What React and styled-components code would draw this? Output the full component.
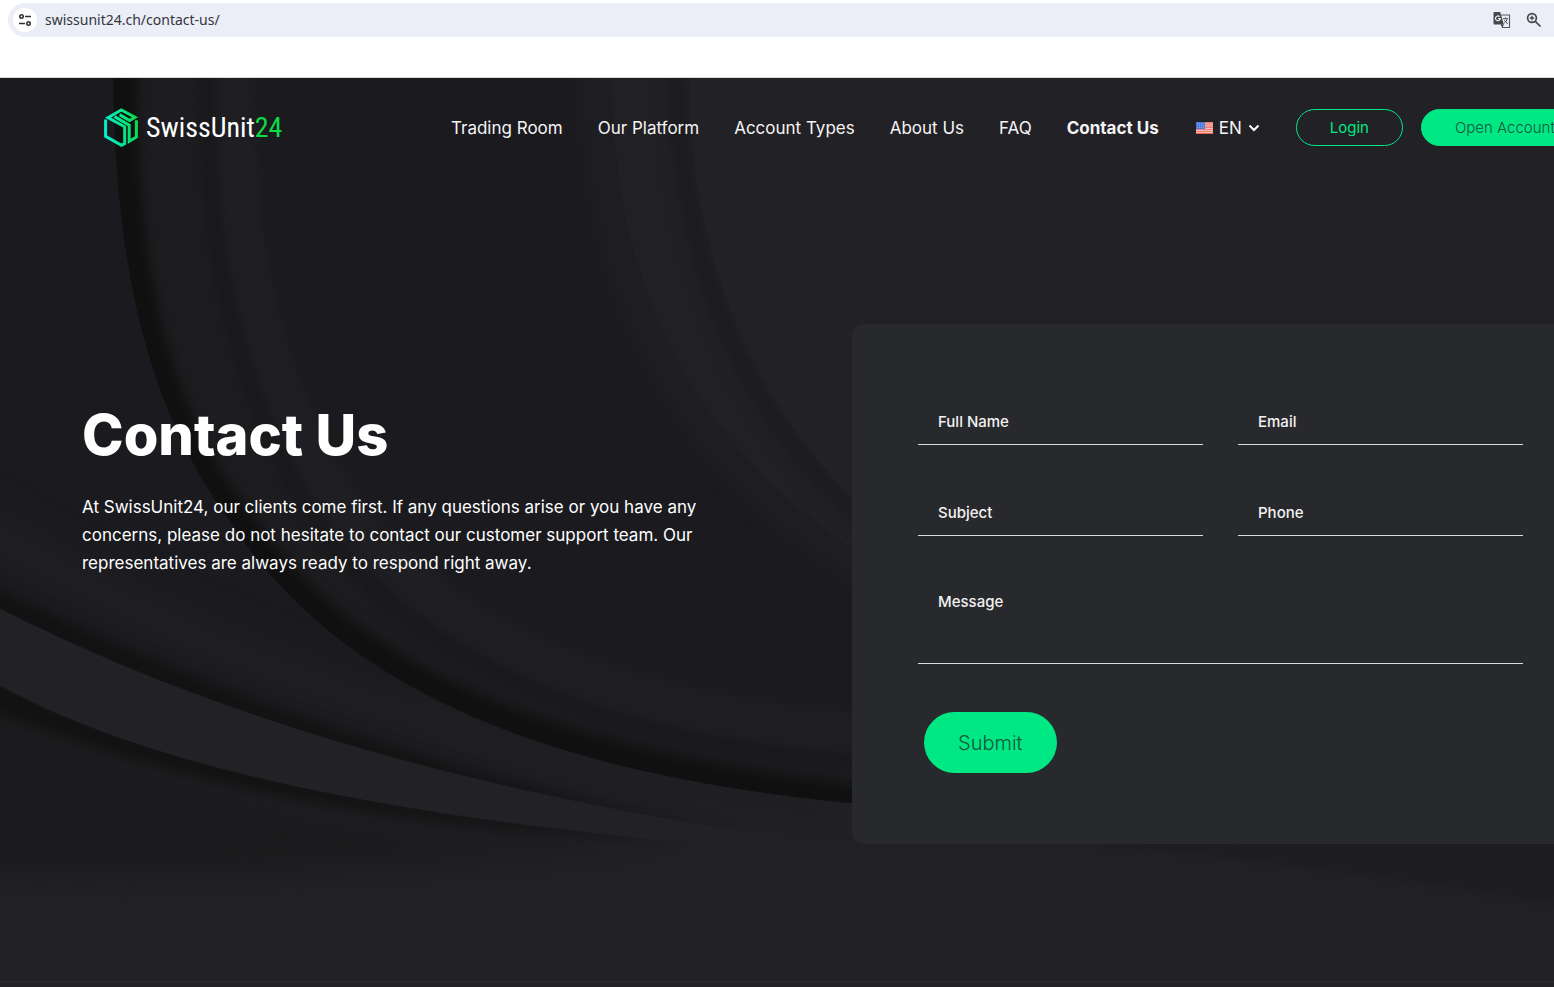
import React from 'react';
import styled, { createGlobalStyle, css } from 'styled-components';

const GlobalStyle = createGlobalStyle`
  *, *::before, *::after { box-sizing: border-box; }
  html, body, #root { min-height: 100vh; }
  body { margin: 0; background: #222126; overflow-x: hidden; font-family: Inter, "Liberation Sans", sans-serif; }
  #root { display: flex; }
  input, textarea, button { font-family: inherit; }
`;

const Page = styled.div`
  flex: 1;
  min-width: 0;
  display: flex;
  flex-direction: column;
`;

const BrowserBar = styled.div`
  height: 78px;
  padding: 3px 0 0 8px;
  background: #fff;
  border-bottom: 1px solid #dcdcdf;
`;

const AddressBar = styled.div`
  height: 34px;
  display: flex;
  align-items: center;
  gap: 8px;
  padding: 0 12px 0 5px;
  background: #ebeef7;
  border-radius: 17px 0 0 17px;
`;

const SiteInfo = styled.button`
  width: 24px;
  height: 24px;
  display: grid;
  place-items: center;
  padding: 0;
  border: 0;
  border-radius: 50%;
  background: #fff;
`;

const Address = styled.input`
  flex: 1;
  min-width: 0;
  padding: 0;
  border: 0;
  outline: 0;
  background: transparent;
  color: #33353a;
  font: 14px/20px "Noto Sans", sans-serif;
`;

const BarIcons = styled.div`
  display: flex;
  align-items: center;
  gap: 15px;
`;

const Site = styled.div`
  position: relative;
  flex: 1;
  display: flex;
  flex-direction: column;
  overflow: hidden;
  background: #222126;
`;

const Waves = styled.svg`
  position: absolute;
  inset: 0;
  width: 100%;
  height: 100%;
`;

const Header = styled.header`
  position: relative;
  display: flex;
  align-items: center;
  height: 99px;
  padding-left: 104px;
`;

const Logo = styled.a`
  display: flex;
  align-items: center;
  gap: 8px;
  width: 347px;
  flex: none;
  color: #fff;
  text-decoration: none;
  font: 28px/38px "Roboto Condensed", Roboto, sans-serif;
`;

const LogoNumber = styled.span`
  color: #0bdc46;
`;

const Nav = styled.nav`
  flex: none;
  display: flex;
  align-items: center;
  gap: 35px;
`;

const NavLink = styled.a`
  color: #f4f4f4;
  font-size: 17px;
  line-height: 24px;
  font-weight: ${(p) => (p.$active ? 700 : 400)};
  text-decoration: none;
  white-space: nowrap;
`;

const Language = styled.button`
  display: flex;
  align-items: center;
  gap: 6px;
  padding: 0 0 0 2px;
  border: 0;
  background: none;
  color: #f4f4f4;
  font-size: 17px;
  line-height: 24px;
`;

const Actions = styled.div`
  flex: none;
  display: flex;
  gap: 18px;
  margin-left: 36px;
`;

const PillLink = styled.a`
  height: 37px;
  padding: 0 33px;
  border: 1px solid #00e884;
  border-radius: 19px;
  font-size: 15px;
  line-height: 35px;
  text-decoration: none;
  white-space: nowrap;
  ${(p) =>
    p.$filled
      ? css`background: #00e884; color: #17553d; font-weight: 300;`
      : css`color: #00e884;`}
`;

const Main = styled.main`
  position: relative;
  flex: 1;
  display: grid;
  grid-template-columns: minmax(0, 770px) minmax(702px, 1fr);
  align-items: start;
  padding: 147px 0 0 82px;
`;

const Intro = styled.section`
  padding: 76px 120px 0 0;
  color: #fff;
`;

const Title = styled.h1`
  margin: 0 0 23px;
  font-size: 56px;
  line-height: 70px;
  font-weight: 800;
`;

const Lead = styled.p`
  margin: 0;
  font-size: 17px;
  line-height: 28px;
`;

const Card = styled.form`
  height: 520px;
  padding: 74px 31px 0 66px;
  display: grid;
  grid-template-columns: 1fr 1fr;
  grid-auto-rows: max-content;
  column-gap: 35px;
  row-gap: 44px;
  border-radius: 12px 0 0 12px;
  background: #28292d;
`;

const fieldStyle = css`
  display: block;
  width: 100%;
  border: 0;
  border-bottom: 1px solid #dedede;
  border-radius: 0;
  outline: 0;
  background: transparent;
  color: #f2f2f2;
  font-size: 15px;
  font-weight: 500;
  line-height: 20px;
  &::placeholder { color: #f2f2f2; opacity: 1; }
`;

const Input = styled.input`
  ${fieldStyle}
  height: 47px;
  padding: 0 20px;
`;

const Message = styled.textarea`
  ${fieldStyle}
  grid-column: 1 / -1;
  height: 84px;
  padding: 12px 20px;
  resize: none;
`;

const Submit = styled.button`
  justify-self: start;
  height: 61px;
  margin: 4px 6px 0;
  padding: 0 34px;
  border: 0;
  border-radius: 31px;
  background: #00e884;
  color: #17553d;
  font-size: 20px;
  font-weight: 300;
  line-height: 24px;
`;

const Footer = styled.footer`
  position: relative;
  height: 6px;
  border-top: 1px solid #2a2a2e;
`;

function TuneIcon() {
  return (
    <svg width="14" height="14" viewBox="0 0 14 14" fill="none" stroke="#303236" strokeWidth="1.6">
      <circle cx="3.5" cy="3.5" r="1.7" />
      <path d="M7 3.5h6M1 10.5h6" />
      <circle cx="10.5" cy="10.5" r="1.7" />
    </svg>
  );
}

function TranslateIcon() {
  return (
    <svg width="18" height="18" viewBox="0 0 18 18">
      <path d="M8 4h8.5v12.5H9.5L8 12" fill="none" stroke="#55575b" strokeWidth="1.1" />
      <path d="M1.5 1h5.6l3.8 12.5H1.5a1 1 0 0 1-1-1V2a1 1 0 0 1 1-1z" fill="#46484c" />
      <path d="M6.6 5.6a2.4 2.4 0 1 0 .7 2H5.2" fill="none" stroke="#fff" strokeWidth="1.1" />
      <path d="M10 7.6h5M12.4 6.4v1.2M14.2 7.6c-.4 2-1.8 3.6-3 4.5M11.3 9l3.4 4" fill="none" stroke="#55575b" />
      <path d="M8 13.5h3l-1.6 3z" fill="#46484c" />
    </svg>
  );
}

function ZoomIcon() {
  return (
    <svg width="16" height="16" viewBox="0 0 16 16" fill="none" stroke="#46484c" strokeWidth="1.7">
      <circle cx="6" cy="6" r="4.4" />
      <path d="M9.3 9.3 14.5 14.5" />
      <path d="M6 3.8v4.4M3.8 6h4.4" strokeWidth="1.3" />
    </svg>
  );
}

function CubeLogo() {
  return (
    <svg width="34" height="39" viewBox="0 0 34 39" fill="none" stroke="url(#cube)" strokeWidth="3">
      <defs>
        <linearGradient id="cube" gradientUnits="userSpaceOnUse" x1="0" y1="20" x2="34" y2="16">
          <stop offset="0" stopColor="#06efd0" />
          <stop offset=".5" stopColor="#06e694" />
          <stop offset="1" stopColor="#0bdc46" />
        </linearGradient>
      </defs>
      <path d="M1.6 11.4V28.4L17.5 37.2L20.7 35.6V18.8L4 9.6L17.3 1.9L31 9.3L25.6 12.6L15.6 6.6" />
      <path d="M10.6 8.6L25.2 17.2V33.4L32.4 29V12.2" />
    </svg>
  );
}

function Flag() {
  return (
    <svg width="17" height="12" viewBox="0 0 17 12">
      <rect width="17" height="12" fill="#f7dcd8" />
      <path d="M0 .9h17M0 3h17M0 5.1h17M0 7.2h17M0 9.3h17M0 11.4h17" stroke="#ec5f50" strokeWidth="1.1" />
      <rect width="9" height="7" fill="#4a78dc" />
      <path d="M1 1.5h7M1 3.5h7M1 5.5h7" stroke="#a9c2f5" strokeWidth=".7" strokeDasharray="1 1" />
    </svg>
  );
}

function Chevron() {
  return (
    <svg width="12" height="8" viewBox="0 0 12 8" fill="none" stroke="#fff" strokeWidth="2">
      <path d="M1.5 1.5 6 6l4.5-4.5" />
    </svg>
  );
}

function Background() {
  return (
    <Waves viewBox="0 0 1554 850" preserveAspectRatio="none" aria-hidden="true">
      <defs>
        <filter id="soft" filterUnits="userSpaceOnUse" x="-100" y="-100" width="1754" height="1050" colorInterpolationFilters="sRGB">
          <feGaussianBlur stdDeviation="6" />
        </filter>
        <filter id="softer" filterUnits="userSpaceOnUse" x="-100" y="-100" width="1754" height="1050" colorInterpolationFilters="sRGB">
          <feGaussianBlur stdDeviation="15" />
        </filter>
        <linearGradient id="lower" gradientUnits="userSpaceOnUse" x1="400" y1="0" x2="760" y2="0">
          <stop offset="0" stopColor="#1b1b1f" />
          <stop offset="1" stopColor="#222126" />
        </linearGradient>
        <clipPath id="mainSheet">
          <path d="M113 0C115 170 145 305 228 412C330 560 520 648 850 678L1554 700V0Z" />
        </clipPath>
        <clipPath id="innerSheet">
          <path d="M216 0C216 150 232 250 304 380C390 520 560 610 850 632L1554 640V0Z" />
        </clipPath>
        <clipPath id="aboveA"><path d="M0 0H1554V720H850C540 680 250 615 0 496Z" /></clipPath>
        <clipPath id="belowB"><path d="M0 568C150 645 390 690 700 716L1554 760V850H0Z" /></clipPath>
      </defs>
      <rect width="1554" height="850" fill="#222126" />
      <path d="M0 0H1554V720H850C540 680 250 615 0 496Z" fill="url(#lower)" />
      <g clipPath="url(#aboveA)">
        <path d="M-60 395C180 540 460 630 850 690" fill="none" stroke="#1f1f23" strokeWidth="40" filter="url(#softer)" />
        <path d="M-40 484C250 622 500 676 740 704C500 666 250 598 -40 460Z" fill="#111211" filter="url(#soft)" />
      </g>
      <g clipPath="url(#belowB)">
        <path d="M-60 560C200 690 450 716 720 716C450 735 200 752 -60 745Z" fill="#1b1b1d" filter="url(#softer)" />
        <path d="M-40 545C150 640 390 684 680 712C430 706 180 668 -40 580Z" fill="#111211" filter="url(#soft)" />
      </g>
      <g clipPath="url(#mainSheet)">
        <rect width="1554" height="760" fill="#1d1d20" />
        <path d="M122 -20C120 170 150 305 233 408C335 554 525 645 900 680" fill="none" stroke="#0f100f" strokeWidth="30" filter="url(#soft)" />
        <path d="M206 -20C206 150 224 255 294 384C380 528 560 618 900 642" fill="none" stroke="#18181a" strokeWidth="12" filter="url(#soft)" />
      </g>
      <g clipPath="url(#innerSheet)">
        <rect width="1554" height="760" fill="#1b1b1f" />
        <path d="M236 -20C236 150 252 245 320 368C406 504 576 594 900 616" fill="none" stroke="#1f1f23" strokeWidth="38" filter="url(#soft)" />
        <path d="M575 -40C575 180 640 370 900 500V-40Z" fill="#1e1e22" filter="url(#soft)" />
        <path d="M612 0C612 180 680 350 900 468H1554V0Z" fill="#212125" />
        <path d="M676 -20C676 160 740 335 900 440" fill="none" stroke="#1c1c20" strokeWidth="18" filter="url(#soft)" />
        <path d="M689 0C689 160 750 320 900 434H1554V0Z" fill="#222126" />
      </g>
      <path d="M1040 712C1200 724 1380 744 1600 780V690H1040Z" fill="#1d1d1f" filter="url(#soft)" />
    </Waves>
  );
}

const LINKS = ['Trading Room', 'Our Platform', 'Account Types', 'About Us', 'FAQ', 'Contact Us'];

export default function App() {
  return (
    <Page>
      <GlobalStyle />
      <BrowserBar>
        <AddressBar>
          <SiteInfo aria-label="Site information"><TuneIcon /></SiteInfo>
          <Address aria-label="Address" defaultValue="swissunit24.ch/contact-us/" />
          <BarIcons><TranslateIcon /><ZoomIcon /></BarIcons>
        </AddressBar>
      </BrowserBar>
      <Site>
        <Background />
        <Header>
          <Logo href="#"><CubeLogo /><span>SwissUnit<LogoNumber>24</LogoNumber></span></Logo>
          <Nav>
            {LINKS.map((name) => (
              <NavLink key={name} href="#" $active={name === 'Contact Us'}>{name}</NavLink>
            ))}
            <Language type="button"><Flag />EN<Chevron /></Language>
          </Nav>
          <Actions>
            <PillLink href="#">Login</PillLink>
            <PillLink href="#" $filled>Open Account</PillLink>
          </Actions>
        </Header>
        <Main>
          <Intro>
            <Title>Contact Us</Title>
            <Lead>
              At SwissUnit24, our clients come first. If any questions arise or you have any
              concerns, please do not hesitate to contact our customer support team. Our
              representatives are always ready to respond right away.
            </Lead>
          </Intro>
          <Card>
            <Input aria-label="Full Name" placeholder="Full Name" />
            <Input aria-label="Email" placeholder="Email" type="email" />
            <Input aria-label="Subject" placeholder="Subject" />
            <Input aria-label="Phone" placeholder="Phone" type="tel" />
            <Message aria-label="Message" placeholder="Message" />
            <Submit type="button">Submit</Submit>
          </Card>
        </Main>
        <Footer />
      </Site>
    </Page>
  );
}
